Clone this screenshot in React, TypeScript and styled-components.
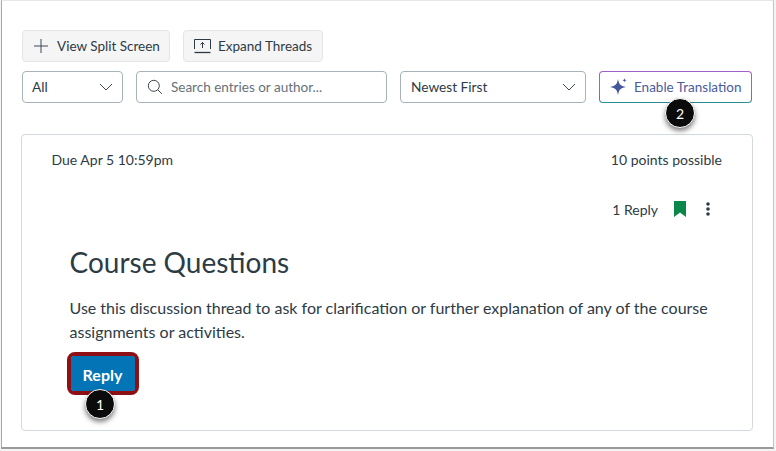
import React from "react";
import styled, { createGlobalStyle } from "styled-components";

const Global = createGlobalStyle`
  html, body { margin: 0; padding: 0; background: #f4f4f4; }
  body { width: 776px; height: 451px; overflow: hidden; font-family: Lato, "Noto Sans", sans-serif; color: #2d3b45; }
  * { box-sizing: border-box; }
`;

const Frame = styled.div`
  width: 773px;
  height: 449px;
  margin-left: 1px;
  background: #fff;
  border-left: 1px solid #a8a8a8;
  border-right: 1px solid #c4c4c4;
  border-bottom: 2px solid #9a9a9a;
  border-top: 1px solid #e6e6e6;
  padding: 29px 20px 0 20px;
  display: flex;
  flex-direction: column;
`;

const ToolRow = styled.div`
  display: flex;
  gap: 13px;
`;

const ToolButton = styled.div<{ $w: number; $gap: number; $pl: number }>`
  width: ${(p) => p.$w}px;
  height: 32px;
  background: #f5f5f5;
  border: 1px solid #e3e6e8;
  border-radius: 4px;
  display: flex;
  align-items: center;
  gap: ${(p) => p.$gap}px;
  padding: 0 0 1px ${(p) => p.$pl}px;
  font-size: 13.5px;
  color: #2d3b45;
`;

const FilterRow = styled.div`
  display: flex;
  gap: 13px;
  margin-top: 9px;
`;

const Field = styled.div<{ $w: number; $pl?: number }>`
  width: ${(p) => p.$w}px;
  height: 32px;
  background: #fff;
  border: 1px solid #a8b2bb;
  border-radius: 4px;
  display: flex;
  align-items: center;
  justify-content: space-between;
  padding: 0 9.5px 1px ${(p) => p.$pl ?? 10}px;
  font-size: 13.7px;
  color: #2d3b45;
`;

const SearchField = styled(Field)`
  justify-content: flex-start;
  gap: 8px;
  font-size: 13.5px;
  color: #66717b;
`;

const TranslateWrap = styled.div`
  position: relative;
  width: 153px;
  height: 32px;
  padding: 1px;
  border-radius: 4px;
  background: linear-gradient(180deg, #a35fc9 0%, #6b7fc0 50%, #2a8f94 100%);
`;

const TranslateButton = styled.div`
  width: 100%;
  height: 100%;
  background: #fff;
  border-radius: 3px;
  display: flex;
  align-items: center;
  gap: 6px;
  padding: 0 0 1px 10px;
  font-size: 13.5px;
  color: #4a5c9e;
`;

const Badge = styled.div`
  position: absolute;
  width: 30px;
  height: 30px;
  border-radius: 50%;
  background: #0b0b0b;
  border: 1px solid #fff;
  box-shadow: 0 3px 5px rgba(0, 0, 0, 0.5);
  color: #fff;
  font-size: 14px;
  display: flex;
  align-items: center;
  justify-content: center;
  z-index: 2;
`;

const TopBadge = styled(Badge)`
  left: 66px;
  top: 27px;
`;

const ReplyBadge = styled(Badge)`
  left: 14.5px;
  top: 33px;
`;

const Card = styled.div`
  margin-top: 31px;
  width: 732px;
  height: 297px;
  margin-left: -1px;
  border: 1px solid #d3d9dc;
  border-radius: 4px;
  padding: 15px 30px 0 29.5px;
  display: flex;
  flex-direction: column;
`;

const MetaRow = styled.div`
  display: flex;
  justify-content: space-between;
  font-size: 14px;
  line-height: 20px;
  color: #2d3b45;
`;

const ActionRow = styled.div`
  display: flex;
  justify-content: flex-end;
  align-items: center;
  height: 24px;
  margin-top: 27px;
  font-size: 14px;
  color: #2d3b45;
`;

const ReplyCount = styled.span`
  margin-right: 16px;
`;

const BookmarkHolder = styled.span`
  display: flex;
  margin-right: 20px;
`;

const KebabHolder = styled.span`
  display: flex;
  margin-right: 12px;
`;

const Body = styled.div`
  padding-left: 18px;
  margin-top: 23px;
`;

const Title = styled.h1`
  margin: 0;
  font-size: 28px;
  line-height: 36px;
  font-weight: 400;
  color: #2d3b45;
`;

const Paragraph = styled.p`
  margin: 16px 0 0 0;
  font-size: 16px;
  line-height: 24px;
  color: #2d3b45;
  width: 650px;
`;

const ReplyWrap = styled.div`
  position: relative;
  margin: 8px 0 0 -3px;
  width: 72px;
  height: 43px;
  border: 4px solid #8e0f14;
  border-radius: 8px;
`;

const ReplyButton = styled.div`
  width: 100%;
  height: 100%;
  background: #0374b5;
  border-radius: 3px;
  color: #fff;
  font-weight: 700;
  font-size: 16px;
  padding-top: 1px;
  display: flex;
  align-items: center;
  justify-content: center;
`;

const Chevron = () => (
  <svg width="14" height="14" viewBox="0 0 14 14" fill="none" stroke="#3c4852" strokeWidth="1">
    <path d="M1 4l6 6 6-6" />
  </svg>
);

export default function App() {
  return (
    <>
      <Global />
      <Frame>
        <ToolRow>
          <ToolButton $w={148} $gap={9} $pl={11}>
            <svg width="14" height="14" viewBox="0 0 14 14" stroke="#3c4852" strokeWidth="1" fill="none">
              <path d="M7 0v14M0 7h14" />
            </svg>
            View Split Screen
          </ToolButton>
          <ToolButton $w={140} $gap={7} $pl={10}>
            <svg width="17" height="16" viewBox="0 0 17 16" stroke="#2d3b45" fill="none" strokeWidth="1">
              <path d="M.5 11V1.500h16V11" />
              <path d="M.5 14.500h16" strokeWidth="1.300" />
              <path d="M8.500 10V4.500M6.500 6.500l2-2 2 2" />
            </svg>
            Expand Threads
          </ToolButton>
        </ToolRow>
        <FilterRow>
          <Field $w={101} $pl={9}>
            All
            <Chevron />
          </Field>
          <SearchField $w={251}>
            <svg width="16" height="16" viewBox="0 0 16 16" fill="none" stroke="#3c4852" strokeWidth="1">
              <circle cx="6.800" cy="6.800" r="5.500" />
              <path d="M10.800 10.800l4 4" />
            </svg>
            Search entries or author...
          </SearchField>
          <Field $w={186}>
            Newest First
            <Chevron />
          </Field>
          <TranslateWrap>
            <TranslateButton>
              <svg width="18" height="18" viewBox="0 0 18 18" fill="#45579b">
                <path d="M8 1C9 6 10 8 16 9 10 10 9 12 8 17 7 12 6 10 0 9 6 8 7 6 8 1z" />
                <path d="M14.500 0c.2 1.500.8 2.100 2.300 2.300-1.500.2-2.100.8-2.300 2.300-.2-1.500-.8-2.100-2.300-2.300 1.500-.2 2.100-.8 2.300-2.300z" />
              </svg>
              Enable Translation
            </TranslateButton>
            <TopBadge>2</TopBadge>
          </TranslateWrap>
        </FilterRow>
        <Card>
          <MetaRow>
            <span>Due Apr 5 10:59pm</span>
            <span>10 points possible</span>
          </MetaRow>
          <ActionRow>
            <ReplyCount>1 Reply</ReplyCount>
            <BookmarkHolder>
              <svg width="12" height="16" viewBox="0 0 12 16" fill="#0b874b">
                <path d="M0 0h12v16L6 11.500 0 16z" />
              </svg>
            </BookmarkHolder>
            <KebabHolder>
              <svg width="4" height="14" viewBox="0 0 4 14" fill="#2d3b45">
                <circle cx="2" cy="2" r="1.800" />
                <circle cx="2" cy="7" r="1.800" />
                <circle cx="2" cy="12" r="1.800" />
              </svg>
            </KebabHolder>
          </ActionRow>
          <Body>
            <Title>Course Questions</Title>
            <Paragraph>
              Use this discussion thread to ask for clarification or further explanation of any of the course assignments or activities.
            </Paragraph>
            <ReplyWrap>
              <ReplyButton>Reply</ReplyButton>
              <ReplyBadge>1</ReplyBadge>
            </ReplyWrap>
          </Body>
        </Card>
      </Frame>
    </>
  );
}
